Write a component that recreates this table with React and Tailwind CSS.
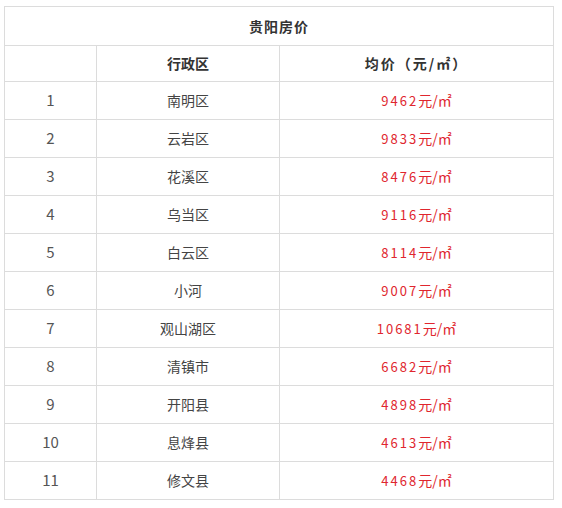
import React from 'react';

const rows = [
    ['1', '南明区', '9462'],
    ['2', '云岩区', '9833'],
    ['3', '花溪区', '8476'],
    ['4', '乌当区', '9116'],
    ['5', '白云区', '8114'],
    ['6', '小河', '9007'],
    ['7', '观山湖区', '10681'],
    ['8', '清镇市', '6682'],
    ['9', '开阳县', '4898'],
    ['10', '息烽县', '4613'],
    ['11', '修文县', '4468'],
];

const cell = 'border border-[#dcdcdc] text-center align-middle p-0';

export default function App() {
    return (
        <div
            className="w-[562px] h-[508px] bg-white pt-[6px] pl-[4px]"
            style={{ fontFamily: '"Noto Sans CJK SC", "Noto Sans", sans-serif' }}
        >
            <table className="border-collapse w-[550px] table-fixed text-[14px] text-[#3e3e3e]">
                <colgroup>
                    <col className="w-[92px]" />
                    <col className="w-[183px]" />
                    <col />
                </colgroup>
                <tbody>
                    <tr className="h-[39px]">
                        <td colSpan={3} className={`${cell} font-bold text-[#333] tracking-[1px]`}>
                            贵阳房价
                        </td>
                    </tr>
                    <tr className="h-[36px]">
                        <td className={cell}></td>
                        <td className={`${cell} font-bold text-[#333]`}>行政区</td>
                        <td className={`${cell} font-bold text-[#333] tracking-[2px]`}>均价（元/㎡）</td>
                    </tr>
                    {rows.map(([n, name, price]) => (
                        <tr key={n} className="h-[38px]">
                            <td className={`${cell} text-[15px] text-[#555]`}>{n}</td>
                            <td className={`${cell} text-[#444]`}>{name}</td>
                            <td className={`${cell} text-[#e0262e]`}>
                                <span className="text-[13px] tracking-[2px]">{price}</span>
                                <span>元/㎡</span>
                            </td>
                        </tr>
                    ))}
                </tbody>
            </table>
        </div>
    );
}
